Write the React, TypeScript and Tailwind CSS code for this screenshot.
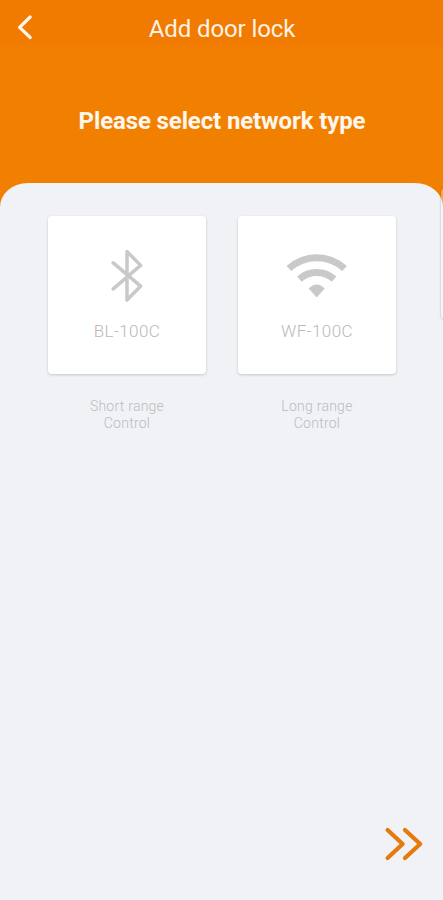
import type { ReactNode } from 'react'

function BluetoothIcon() {
  return (
    <svg className="w-[34px] h-[56px]" viewBox="0 0 34 56" fill="none" stroke="#c9c9c9" strokeWidth={3.5}>
      <path strokeLinecap="round" strokeLinejoin="round" d="M3.2 14.8L30.6 38.2L17 52V3.4L30.6 17.4L3.2 40.8" />
    </svg>
  )
}

function WifiIcon() {
  return (
    <svg className="w-[64px] h-[56px]" viewBox="0 0 64 56" fill="none" stroke="#c9c9c9" strokeWidth={7}>
      <path d="M3.9 20.5A41 41 0 0 1 59.5 20.5" />
      <path d="M14.4 31.2A26 26 0 0 1 49 31.2" />
      <path fill="#c9c9c9" stroke="none" d="M23.7 40.6Q31.7 32.6 39.7 40.6L31.7 49.4Z" />
    </svg>
  )
}

type OptionProps = {
  icon: ReactNode
  name: string
  range: string
}

function NetworkOption({ icon, name, range }: OptionProps) {
  return (
    <button type="button" className="w-[158px] flex flex-col items-center">
      <span className="w-[158px] h-[158px] pt-[32px] rounded-[4px] bg-white shadow-[0_1px_3px_rgba(0,0,0,0.18)] flex flex-col items-center">
        {icon}
        <span className="mt-[17px] text-[17px] leading-5 font-light tracking-[0.4px] text-[#b9b9b9]">{name}</span>
      </span>
      <span className="mt-[24px] text-[14px] leading-[17px] font-light tracking-[0.25px] text-[#bbbcbe]">
        {range}
        <br />
        Control
      </span>
    </button>
  )
}

export default function App() {
  return (
    <div className="relative w-[443px] h-[900px] overflow-hidden bg-[#f28000] font-['Roboto',sans-serif] flex flex-col">
      <header className="h-[47px] shrink-0 bg-[#f17a00] grid grid-cols-[50px_1fr_50px] items-center pb-[1px]">
        <button type="button" aria-label="Back" className="pl-[16px] pt-[8px] self-start">
          <svg className="w-[18px] h-[38px]" viewBox="0 0 18 38" fill="none" stroke="#fff6ed" strokeWidth={3.2}>
            <path strokeLinecap="round" strokeLinejoin="round" d="M14.2 9L3.6 19.3L14.2 29.5" />
          </svg>
        </button>
        <h1 className="pt-[11px] pl-[1px] text-center text-[24px] leading-7 tracking-[-0.1px] text-[#fff2e6]">Add door lock</h1>
      </header>

      <div className="h-[136px] shrink-0 pt-[60px] pl-[1px] text-center">
        <h2 className="text-[24px] leading-7 font-bold tracking-[-0.12px] text-[#fff6ee]">Please select network type</h2>
      </div>

      <main className="flex-1 rounded-t-[28px_24px] bg-[#f0f2f6] flex flex-col justify-between">
        <div className="pt-[33px] pl-[48px] flex gap-[32px]">
          <NetworkOption icon={<BluetoothIcon />} name="BL-100C" range="Short range" />
          <NetworkOption icon={<WifiIcon />} name="WF-100C" range="Long range" />
        </div>
        <div className="flex justify-end pr-[19px] pb-[36px]">
          <button type="button" aria-label="Next">
            <svg className="w-[42px] h-[40px]" viewBox="0 0 42 40" fill="none" stroke="#e67a0c" strokeWidth={4.2}>
              <path strokeLinecap="round" strokeLinejoin="round" d="M5.6 6L20.6 20L5.6 34M23 6L38.2 20L23 34" />
            </svg>
          </button>
        </div>
      </main>

      {/* edge of the next card */}
      <div className="absolute left-[441px] top-[187px] w-[20px] h-[133px] rounded-[5px] bg-white/30 shadow-[0_0_2px_rgba(0,0,0,0.35)]" />
    </div>
  )
}
